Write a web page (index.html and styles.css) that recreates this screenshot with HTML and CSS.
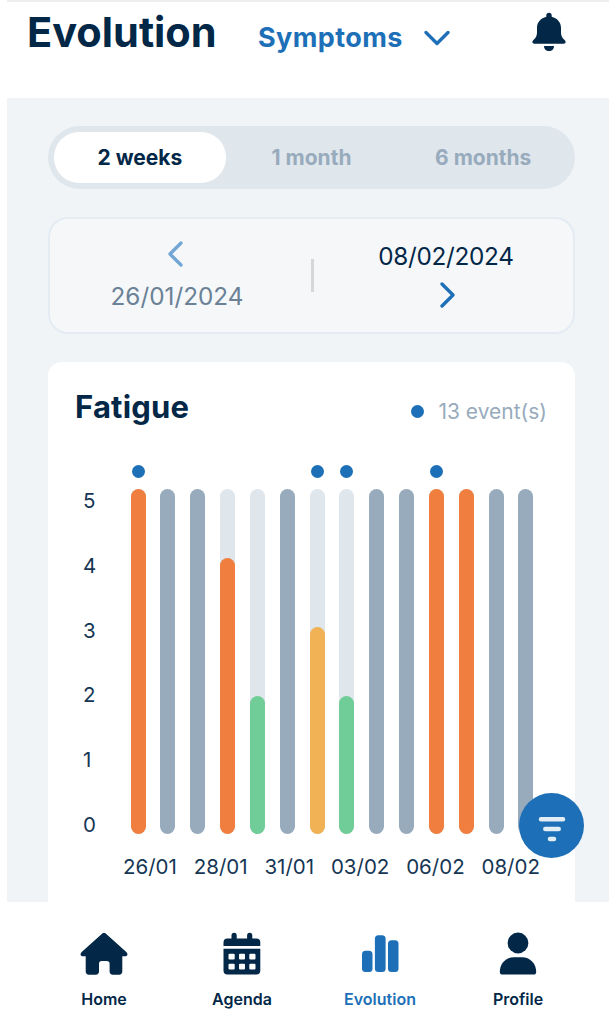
FILE: index.html
```html
<!DOCTYPE html>
<html lang="en">

<head>
    <meta charset="UTF-8">
    <meta name="viewport" content="width=device-width, initial-scale=1.0">
    <title>Evolution</title>
    <link rel="stylesheet" href="styles.css">
</head>

<body>
    <div class="app">
        <header class="header">
            <h1 class="title">Evolution</h1>
            <button class="category">
                <span class="category-name">Symptoms</span>
                <svg class="category-arrow" width="26" height="16" viewBox="0 0 26 16">
                    <path d="M2 2.500 13 13.500 24 2.500" />
                </svg>
            </button>
            <svg class="bell" width="34" height="40" viewBox="0 0 34 40">
                <path d="M17 .8c1.700 0 2.700 1.100 2.700 2.700v1.300c5.300 1.400 9.300 5.400 9.300 11v4.700c0 3.200 1.200 5.500 3.600 7.600 1.800 1.700 1 3.600-1 3.600H2.400c-2 0-2.800-1.900-1-3.600C3.800 26 5 23.700 5 20.500v-4.700c0-5.600 4-9.600 9.300-11V3.500C14.300 1.900 15.300.8 17 .8z" />
                <path d="M12 34h10c0 3-2 5-5 5s-5-2-5-5z" />
            </svg>
        </header>

        <main class="content">
            <div class="tabs">
                <button class="tab tab-active">2 weeks</button>
                <button class="tab">1 month</button>
                <button class="tab">6 months</button>
            </div>

            <section class="range">
                <div class="range-side range-from">
                    <svg width="16" height="26" viewBox="0 0 16 26">
                        <path d="M14 2 3 13 14 24" />
                    </svg>
                    <span>26/01/2024</span>
                </div>
                <span class="range-separator"></span>
                <div class="range-side range-to">
                    <span>08/02/2024</span>
                    <svg width="16" height="26" viewBox="0 0 16 26">
                        <path d="M2 2 13 13 2 24" />
                    </svg>
                </div>
            </section>

            <section class="card">
                <div class="card-header">
                    <h2 class="card-title">Fatigue</h2>
                    <div class="legend"><span class="dot"></span><span class="legend-text">13 event(s)</span></div>
                </div>
                <div class="chart">
                    <div class="axis">
                        <span>5</span>
                        <span>4</span>
                        <span>3</span>
                        <span>2</span>
                        <span>1</span>
                        <span>0</span>
                    </div>
                    <div class="bars">
                        <div class="day"><i class="dot"></i><div class="bar"><div class="fill orange" style="height: 100%"></div></div></div>
                        <div class="day"><div class="bar bar-empty"></div></div>
                        <div class="day"><div class="bar bar-empty"></div></div>
                        <div class="day"><div class="bar"><div class="fill orange" style="height: 80%"></div></div></div>
                        <div class="day"><div class="bar"><div class="fill green" style="height: 40%"></div></div></div>
                        <div class="day"><div class="bar bar-empty"></div></div>
                        <div class="day"><i class="dot"></i><div class="bar"><div class="fill yellow" style="height: 60%"></div></div></div>
                        <div class="day"><i class="dot"></i><div class="bar"><div class="fill green" style="height: 40%"></div></div></div>
                        <div class="day"><div class="bar bar-empty"></div></div>
                        <div class="day"><div class="bar bar-empty"></div></div>
                        <div class="day"><i class="dot"></i><div class="bar"><div class="fill orange" style="height: 100%"></div></div></div>
                        <div class="day"><div class="bar"><div class="fill orange" style="height: 100%"></div></div></div>
                        <div class="day"><div class="bar bar-empty"></div></div>
                        <div class="day"><div class="bar bar-empty"></div></div>
                    </div>
                </div>
                <div class="dates">
                    <span>26/01</span>
                    <span>28/01</span>
                    <span>31/01</span>
                    <span>03/02</span>
                    <span>06/02</span>
                    <span>08/02</span>
                </div>
            </section>

            <button class="filter" aria-label="Filter">
                <svg width="28" height="26" viewBox="0 0 28 26">
                    <path d="M3 3.200h22M7.300 13h13.400M12 23h4" />
                </svg>
            </button>
        </main>

        <nav class="nav">
            <a class="nav-item">
                <svg width="48" height="44" viewBox="0 0 48 44">
                    <path d="M22.300 1.600c1.100-1 2.300-1 3.400 0l20.600 18.300c2 1.900 1.300 4.400-1.300 4.400h-2.700v15.200c0 2-1.200 3.200-3.200 3.200h-6.300c-2 0-3.200-1.200-3.200-3.200v-7.700c0-1.800-1-2.800-2.800-2.800h-5c-1.800 0-2.800 1-2.800 2.800v7.700c0 2-1.200 3.200-3.200 3.200H8.900c-2 0-3.200-1.200-3.200-3.200V24.300H3c-2.600 0-3.300-2.500-1.300-4.400z" />
                </svg>
                <span>Home</span>
            </a>
            <a class="nav-item">
                <svg width="48" height="44" viewBox="0 0 48 44">
                    <path d="M5.500 14V10.500q0-4 4-4h4V3.500q0-2.700 2.600-2.700t2.600 2.700v3h10.400v-3q0-2.700 2.600-2.700t2.600 2.700v3h4q4 0 4 4V14z" />
                    <path fill-rule="evenodd" d="M5.500 16.700h36.800V38.500q0 4-4 4H9.500q-4 0-4-4zM11.500 21.700h4.200q1 0 1 1v3.900q0 1-1 1h-4.200q-1 0-1-1v-3.900q0-1 1-1zM22 21.700h4q1 0 1 1v3.900q0 1-1 1h-4q-1 0-1-1v-3.900q0-1 1-1zM32.300 21.700h4.200q1 0 1 1v3.900q0 1-1 1h-4.200q-1 0-1-1v-3.900q0-1 1-1zM11.500 31.700h4.200q1 0 1 1v3.900q0 1-1 1h-4.200q-1 0-1-1v-3.900q0-1 1-1zM22 31.700h4q1 0 1 1v3.900q0 1-1 1h-4q-1 0-1-1v-3.900q0-1 1-1zM32.300 31.700h4.200q1 0 1 1v3.900q0 1-1 1h-4.200q-1 0-1-1v-3.900q0-1 1-1z" />
                </svg>
                <span>Agenda</span>
            </a>
            <a class="nav-item nav-active">
                <svg width="48" height="44" viewBox="0 0 48 44">
                    <rect x="6" y="18.700" width="10.500" height="21.300" rx="3.500" />
                    <rect x="18.900" y="3.200" width="10.700" height="36.800" rx="3.500" />
                    <rect x="32" y="8.300" width="10.500" height="31.700" rx="3.500" />
                </svg>
                <span>Evolution</span>
            </a>
            <a class="nav-item">
                <svg width="48" height="44" viewBox="0 0 48 44">
                    <circle cx="24" cy="11" r="10.400" />
                    <path d="M20 25.200h8c8 0 14.200 6.200 14.200 14.800 0 1.700-1 2.600-2.600 2.600H8.400c-1.600 0-2.600-.9-2.600-2.600 0-8.600 6.200-14.800 14.200-14.800z" />
                </svg>
                <span>Profile</span>
            </a>
        </nav>
    </div>
</body>

</html>
```
FILE: styles.css
```css
* {
    box-sizing: border-box;
}

body {
    margin: 0;
    background: #fff;
    color: #022747;
    font-family: Inter, "Liberation Sans", sans-serif;
}

button {
    border: 0;
    padding: 0;
    background: none;
    color: inherit;
    font: inherit;
}

svg {
    display: block;
    flex: none;
}

.app {
    display: flex;
    flex-direction: column;
    height: 1024px;
    margin-left: 7px;
    overflow: hidden;
}

/* Header */
.header {
    display: flex;
    align-items: flex-start;
    height: 98px;
    padding: 5px 43px 0 20px;
    border-top: 2px solid #eee;
}

.title {
    width: 231px;
    margin: 0;
    font-size: 41.500px;
    font-weight: 700;
    line-height: 50px;
}

.category {
    display: flex;
    align-items: center;
    gap: 21px;
    margin-top: 12px;
    color: #1d70b7;
    font-size: 27px;
    font-weight: 700;
    letter-spacing: .4px;
    line-height: 38px;
}

.category-arrow,
.range svg {
    fill: none;
    stroke: currentColor;
    stroke-width: 3.300;
    stroke-linecap: round;
    stroke-linejoin: round;
}

.bell {
    margin: 5px 0 0 auto;
    fill: currentColor;
}

/* Content */
.content {
    position: relative;
    display: flex;
    flex-direction: column;
    height: 804px;
    padding: 28px 34px 0 41px;
    background: #f0f4f7;
}

.tabs {
    display: flex;
    flex: none;
    height: 63px;
    padding: 6px;
    border-radius: 32px;
    background: #dfe6ec;
}

.tab {
    flex: 1;
    border-radius: 25px;
    color: #98abbd;
    font-size: 21px;
    font-weight: 700;
}

.tab-active {
    background: #fff;
    color: #022747;
}

.range {
    display: flex;
    flex: none;
    align-items: center;
    height: 117px;
    margin-top: 28px;
    border: 2px solid #e4ebf3;
    border-radius: 20px;
    background: #f5f7f9;
    font-size: 24.300px;
    line-height: 30px;
}

.range-side {
    display: flex;
    flex: 1;
    flex-direction: column;
    align-items: center;
}

.range-from {
    gap: 14px;
    padding-right: 7px;
    color: #6a8196;
}

.range-from svg {
    margin-right: 4px;
    color: #72a6d5;
}

.range-to {
    gap: 11px;
    padding: 0 0 3px 5px;
    letter-spacing: -.3px;
}

.range-to svg {
    margin-left: 3px;
    color: #1d70b7;
}

.range-separator {
    width: 3px;
    height: 33px;
    background: #d5d8db;
}

/* Chart card */
.card {
    flex: 1;
    margin-top: 28px;
    padding: 26px 28px 0 27px;
    border-radius: 14px 14px 0 0;
    background: #fff;
}

.card-header {
    display: flex;
    justify-content: space-between;
    height: 76px;
}

.card-title {
    margin: 0;
    font-size: 31px;
    font-weight: 700;
    letter-spacing: .2px;
    line-height: 38px;
}

.legend {
    display: flex;
    align-items: center;
    gap: 14px;
    height: 46px;
    color: #98abbd;
    font-size: 21px;
}

.dot {
    width: 13px;
    height: 13px;
    border-radius: 50%;
    background: #1d70b7;
}

.chart {
    display: flex;
    height: 370px;
}

.axis {
    display: flex;
    flex-direction: column;
    justify-content: space-between;
    width: 55.500px;
    height: 350px;
    margin-top: 24px;
    padding-left: 8px;
    color: #163654;
    font-size: 20.500px;
    line-height: 26px;
}

.bars {
    display: flex;
    justify-content: space-between;
    width: 403px;
}

.day {
    display: flex;
    flex-direction: column;
    align-items: center;
    justify-content: flex-end;
    gap: 11px;
    width: 15px;
}

.bar {
    display: flex;
    align-items: flex-end;
    width: 15px;
    height: 345px;
    border-radius: 8px;
    background: #dfe6ec;
}

.bar-empty {
    background: #98abbd;
}

.fill {
    width: 100%;
    border-radius: 8px;
}

.orange {
    background: #f07f3f;
}

.yellow {
    background: #f0b254;
}

.green {
    background: #70cd97;
}

.dates {
    display: flex;
    justify-content: space-between;
    width: 417px;
    margin: 20px 0 0 48px;
    color: #163654;
    font-size: 20.500px;
    line-height: 26px;
}

/* Floating over the corner of the chart */
.filter {
    position: absolute;
    right: 25px;
    bottom: 44px;
    display: flex;
    align-items: center;
    justify-content: center;
    width: 65px;
    height: 65px;
    padding-top: 7px;
    border-radius: 50%;
    background: #1d70b7;
}

.filter svg {
    fill: none;
    stroke: #e3edf6;
    stroke-width: 4.500;
    stroke-linecap: round;
}

/* Bottom navigation */
.nav {
    display: flex;
    flex: 1;
    padding: 30px 22px 0 28px;
}

.nav-item {
    display: flex;
    flex: 1;
    flex-direction: column;
    align-items: center;
    gap: 13px;
    font-size: 16px;
    font-weight: 600;
    line-height: 20px;
}

.nav-item svg {
    fill: currentColor;
}

.nav-active {
    color: #1d70b7;
}
```
